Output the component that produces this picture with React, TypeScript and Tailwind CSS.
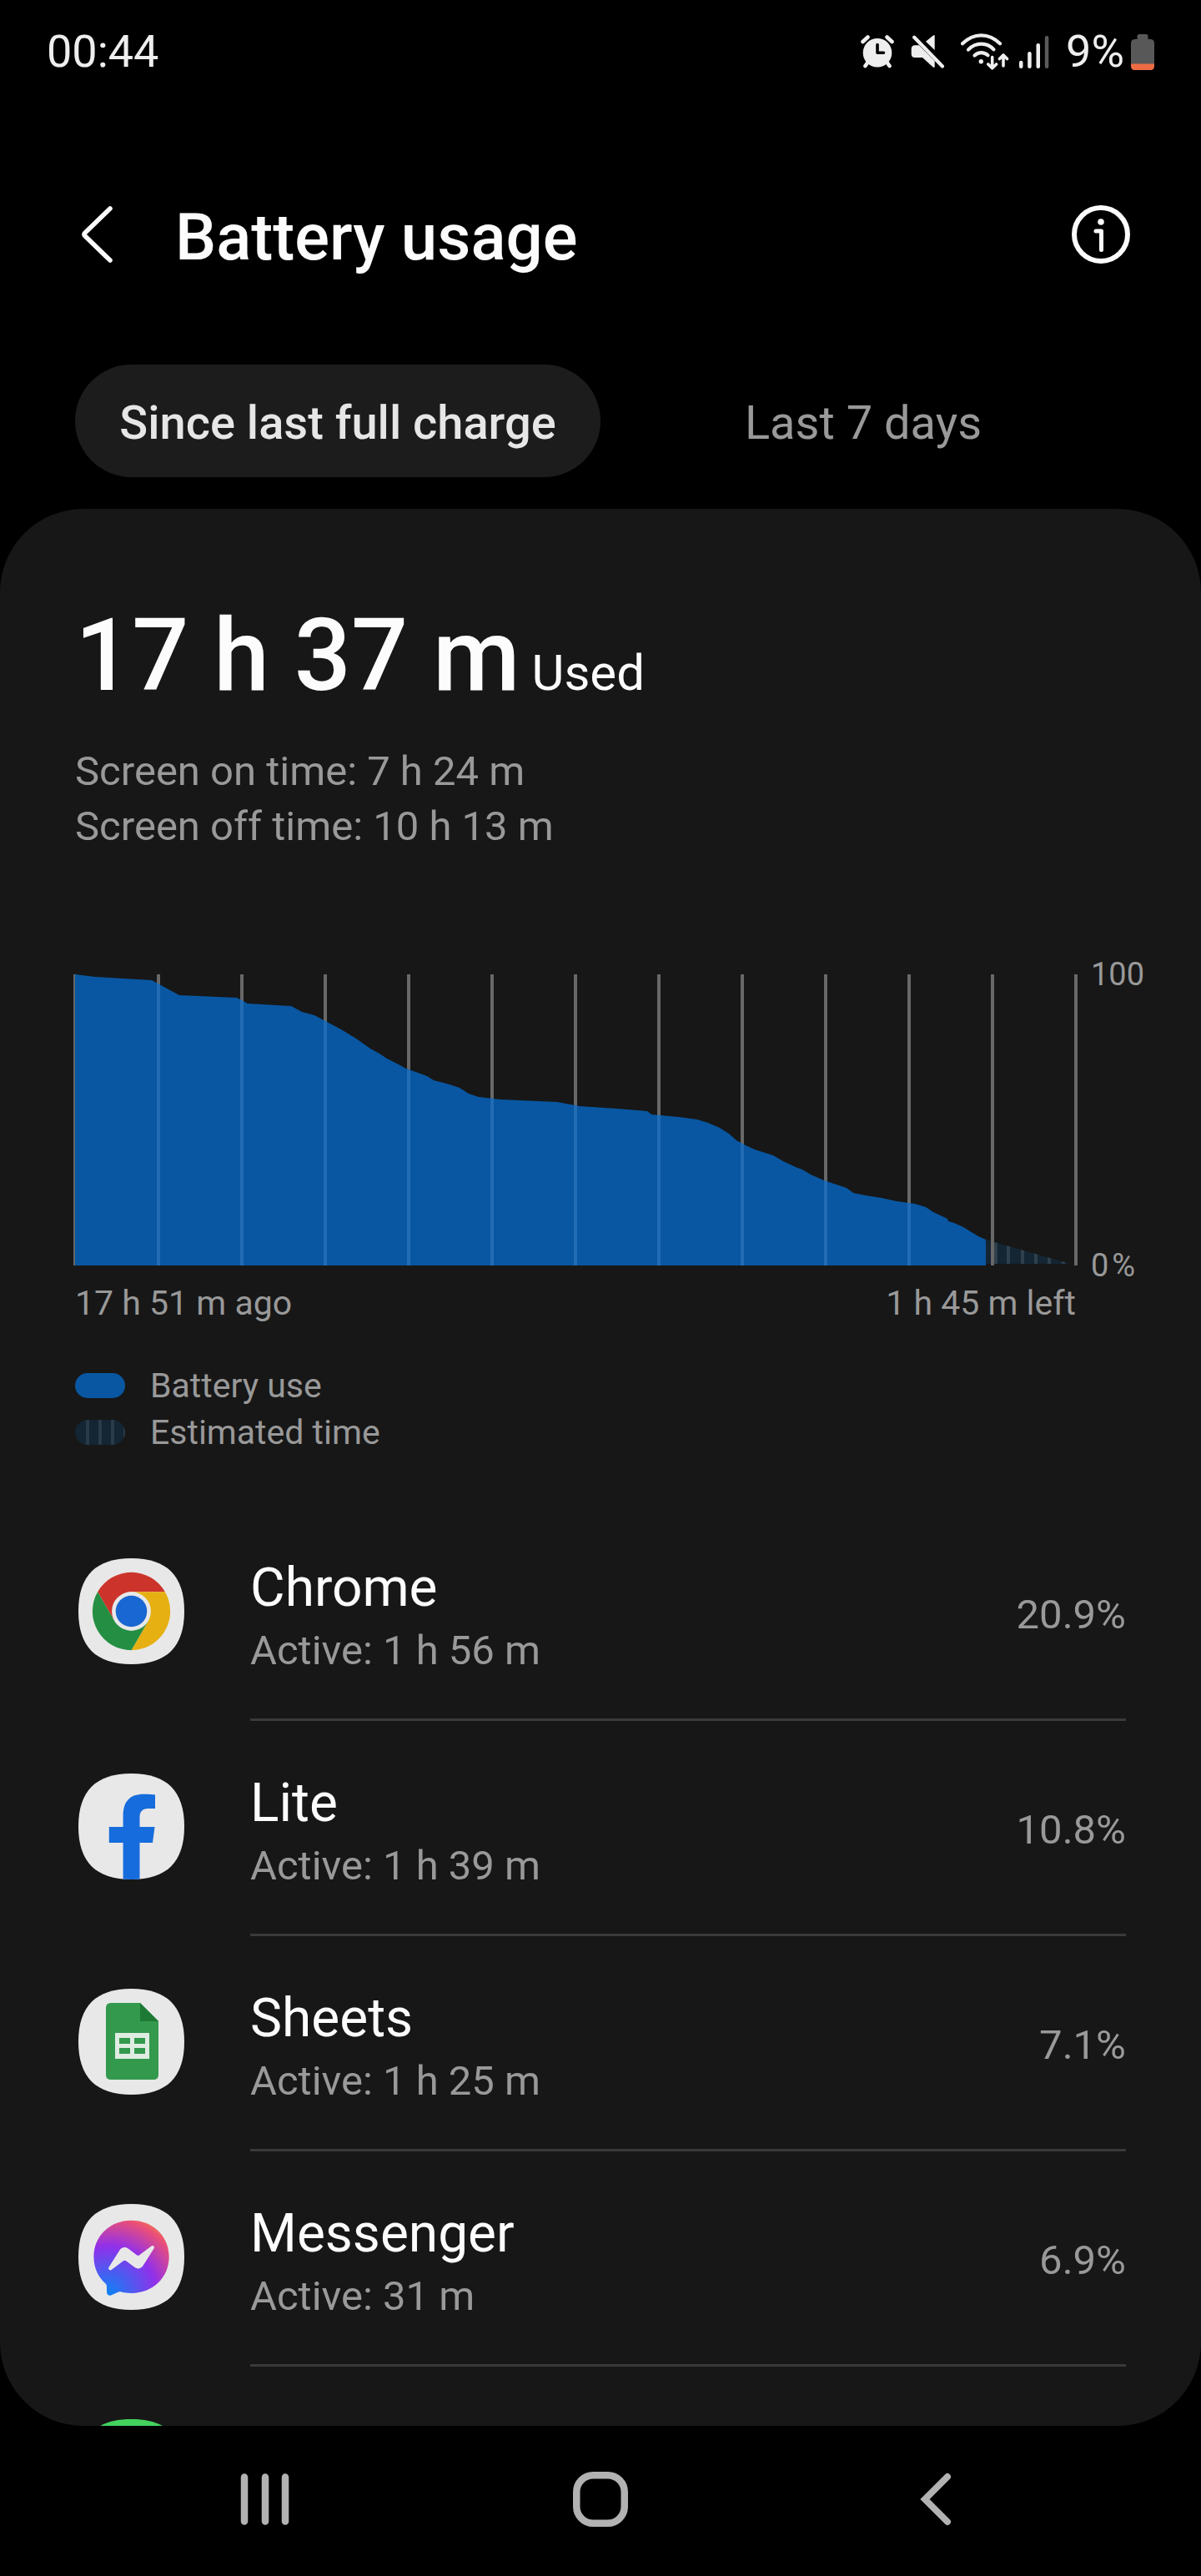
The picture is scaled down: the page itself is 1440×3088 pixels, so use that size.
import type { ReactNode } from "react";

const SQUIRCLE =
  "M63.5 0C106 0 127 21 127 63.5C127 106 106 127 63.5 127C21 127 0 106 0 63.5C0 21 21 0 63.5 0Z";

// chart space: 1200 x 349, y is 0 at 100% and 349 at 0%
const curve =
  "0,0 24,3 92,7 101,12 125,25 194,28 207,35 259,38 272,45 287,49 300,56 319,66 337,77 354,89 365,95 374,101 386,107 397,113 414,119 422,122 430,127 449,132 461,136 472,143 484,147 510,150 578,153 605,158 650,161 686,164 691,168 724,171 746,174 759,178 773,184 784,191 793,199 804,205 815,210 837,217 849,224 864,231 872,234 882,240 898,247 925,256 933,262 948,265 967,268 985,272 1007,275 1020,279 1029,285 1046,293 1047,296 1054,298 1065,303 1083,314 1092,318";

const gridLines = Array.from({ length: 13 }, (_, i) => i * 100);

const IconTile = ({ id, fill, children }: { id: string; fill: string; children?: ReactNode }) => (
  <svg viewBox="0 0 127 127" className="w-[127px] h-[127px] shrink-0" aria-hidden="true">
    <clipPath id={id}>
      <path d={SQUIRCLE} />
    </clipPath>
    <path d={SQUIRCLE} fill={fill} />
    <g clipPath={`url(#${id})`}>{children}</g>
  </svg>
);

const ChromeIcon = () => (
  <IconTile id="tile-chrome" fill="#e8e8e8">
    <g transform="translate(63.5 63.5)">
      <path d="M-40.4 -23.35A46.7 46.7 0 0 1 40.4 -23.35H0L0 0L-20.2 11.7Z" fill="#cc342b" />
      <path d="M40.4 -23.35A46.7 46.7 0 0 1 0 46.7L20.2 11.7L0 0V-23.35Z" fill="#e6b012" />
      <path d="M0 46.7A46.7 46.7 0 0 1 -40.4 -23.35L-20.2 11.7L0 0L20.2 11.7Z" fill="#248f42" />
      <circle r="23.4" fill="#e8e8e8" />
      <circle r="18.8" fill="#1967d2" />
    </g>
  </IconTile>
);

const LiteIcon = () => (
  <IconTile id="tile-lite" fill="#e8e8e8">
    <path
      d="M53.6 127V83H36.8V64H53.6V51C53.6 33 62 24.7 78 24.7C84 24.7 89 25 92 25.6V42H84C76 42 73.5 46 73.5 53V64H91.5L89 83H73.5V127Z"
      fill="#166cdc"
    />
  </IconTile>
);

const SheetsIcon = () => (
  <IconTile id="tile-sheets" fill="#e8e8e8">
    <path d="M39 17H74L96 39V103Q96 109 90 109H39Q33 109 33 103V23Q33 17 39 17Z" fill="#33994d" />
    <path d="M74 17L96 39H74Z" fill="#1d7a35" />
    <path
      fillRule="evenodd"
      d="M44 53H85V84H44ZM49 59V66H62V59ZM67 59V66H80V59ZM49 71V78H62V71ZM67 71V78H80V71Z"
      fill="#dfece2"
    />
  </IconTile>
);

const MessengerIcon = () => (
  <IconTile id="tile-messenger" fill="#e8e8e8">
    <radialGradient id="messenger-fill" cx="0.19" cy="0.99" r="1.09">
      <stop offset="0" stopColor="#0a84f5" />
      <stop offset="0.6" stopColor="#9230ea" />
      <stop offset="0.93" stopColor="#ea4f78" />
      <stop offset="1" stopColor="#f06a5c" />
    </radialGradient>
    <path
      d="M63.5 19.7C38 19.7 18.4 38.3 18.4 63.3C18.4 76.5 23.8 87.8 32.6 95.6C33.4 96.3 33.8 97.3 33.9 98.3L34.1 106.3C34.2 108.9 36.8 110.5 39.1 109.5L48.1 105.5C48.9 105.2 49.8 105.1 50.6 105.3C54.7 106.4 59 107 63.5 107C89 107 108.7 88.3 108.7 63.3C108.7 38.3 89 19.7 63.5 19.7Z"
      fill="url(#messenger-fill)"
    />
    <path
      d="M36.4 76.1L49.7 55.1C51.8 51.7 56.3 50.9 59.4 53.3L70 61.2C71 61.9 72.3 61.9 73.2 61.2L87.5 50.4C89.4 48.9 91.9 51.2 90.6 53.3L77.4 74.3C75.3 77.6 70.8 78.5 67.6 76.1L57.1 68.2C56.1 67.5 54.8 67.5 53.9 68.2L39.6 79C37.7 80.5 35.2 78.2 36.4 76.1Z"
      fill="#e8e8e8"
    />
  </IconTile>
);

const apps = [
  { name: "Chrome", active: "1 h 56 m", percent: "20.9%", icon: <ChromeIcon /> },
  { name: "Lite", active: "1 h 39 m", percent: "10.8%", icon: <LiteIcon /> },
  { name: "Sheets", active: "1 h 25 m", percent: "7.1%", icon: <SheetsIcon /> },
  { name: "Messenger", active: "31 m", percent: "6.9%", icon: <MessengerIcon /> },
];

const StatusBar = () => (
  <div className="h-[124px] flex items-center justify-between px-14 text-[54px] leading-none text-[#eeeeee]">
    <span>00:44</span>
    <div className="flex items-center">
      <svg viewBox="0 0 40 40" className="w-10 h-10" fill="none" strokeLinecap="round" aria-hidden="true">
        <circle cx="20" cy="21.3" r="17.3" fill="#eeeeee" />
        <path d="M2.5 8L8.5 2.5M37.5 8L31.5 2.5M5.5 37L9 32M34.5 37L31 32" stroke="#eeeeee" strokeWidth="4.6" />
        <path d="M20 11.5V21.3H27.5" stroke="#000000" strokeWidth="3.6" strokeLinejoin="round" />
      </svg>
      <svg viewBox="0 0 40 40" className="w-10 h-10 ml-5" fill="#eeeeee" aria-hidden="true">
        <path d="M28.7 0V18L18 7.7L27 0.4Q28.7 -0.6 28.7 1.5Z" />
        <path d="M5 12.3H10L28.7 31.3V37.5Q28.7 40 26.5 38.3L14 27H5Q0.7 27 0.7 22.5V17Q0.7 12.3 5 12.3Z" />
        <path d="M4.2 2.8L38 37.5" stroke="#eeeeee" strokeWidth="4.2" strokeLinecap="round" />
      </svg>
      <svg
        viewBox="0 0 58 44"
        className="w-[58px] h-11 ml-5"
        fill="none"
        stroke="#eeeeee"
        strokeWidth="4.2"
        strokeLinecap="round"
        strokeLinejoin="round"
        aria-hidden="true"
      >
        <path d="M2 12.3Q12 2.3 24.5 2.3T47 12.3" />
        <path d="M9 19.6Q15.5 12.6 24.5 12.6T39.5 19.3" />
        <path d="M16.5 26.5Q20 23.2 24.5 23.2T32.5 26.3" />
        <circle cx="24.3" cy="33.7" r="2.7" fill="#eeeeee" stroke="none" />
        <path d="M37.7 28.5V41.5M32.8 37L37.7 41.8L42.6 37M51 39V26M46.5 30.5L51 26L55.5 30.5" strokeWidth="3.6" />
      </svg>
      <svg viewBox="0 0 36 39" className="w-9 h-[39px] ml-3" fill="#eeeeee" aria-hidden="true">
        <rect x="0" y="29.7" width="4.5" height="9.3" rx="2.2" />
        <rect x="10.2" y="19" width="4.5" height="20" rx="2.2" />
        <rect x="20.5" y="9" width="4.5" height="30" rx="2.2" />
        <rect x="30.8" y="0" width="4.5" height="39" rx="2.2" fill="#5a5a5a" />
      </svg>
      <span className="ml-5">9%</span>
      <svg viewBox="0 0 28 43" className="w-7 h-[43px] ml-2" aria-hidden="true">
        <clipPath id="battery-shape">
          <path d="M10 0H18Q20.5 0 20.5 2.5V6H23Q28 6 28 11V38Q28 43 23 43H5Q0 43 0 38V11Q0 6 5 6H7.5V2.5Q7.5 0 10 0Z" />
        </clipPath>
        <g clipPath="url(#battery-shape)">
          <rect width="28" height="43" fill="#585858" />
          <rect y="35.5" width="28" height="8" fill="#ee6c45" />
        </g>
      </svg>
    </div>
  </div>
);

const Header = () => (
  <header className="h-[313px] flex items-center pl-[90px] pr-[85px]">
    <button type="button" aria-label="Navigate up" className="w-[120px] h-[70px]">
      <svg
        viewBox="0 0 54 70"
        className="w-[54px] h-[70px]"
        fill="none"
        stroke="#fcfcfc"
        strokeWidth="5.5"
        strokeLinecap="round"
        strokeLinejoin="round"
      >
        <path d="M42 4L12 33Q10 35 12 37L42 66" />
      </svg>
    </button>
    <h1 className="flex-1 pt-2 text-[78px] leading-[94px] font-medium text-[#fcfcfc]">Battery usage</h1>
    <button type="button" aria-label="Information" className="w-[70px] h-[70px]">
      <svg
        viewBox="0 0 70 70"
        className="w-[70px] h-[70px]"
        fill="none"
        stroke="#fcfcfc"
        strokeWidth="5"
        strokeLinecap="round"
        strokeLinejoin="round"
      >
        <circle cx="35" cy="35" r="32" strokeWidth="6" />
        <circle cx="35" cy="20" r="3.8" fill="#fcfcfc" stroke="none" />
        <path d="M29 31H35.5V53.5" />
      </svg>
    </button>
  </header>
);

const Tabs = () => (
  <div role="tablist" className="flex px-[90px] text-[56px] leading-[66px]">
    <button
      type="button"
      role="tab"
      aria-selected="true"
      className="flex-1 h-[135px] pt-1 rounded-full bg-[#1c1c1c] font-medium text-[#e6e6e6]"
    >
      Since last full charge
    </button>
    <button type="button" role="tab" aria-selected="false" className="flex-1 h-[135px] pt-1 text-[#999999]">
      Last 7 days
    </button>
  </div>
);

const UsageChart = () => (
  <div className="mt-36">
    <div className="flex gap-[18px] pl-[90px] pr-[60px]">
      <svg
        viewBox="0 0 1200 349"
        preserveAspectRatio="none"
        className="flex-1 min-w-0 h-[349px] overflow-visible"
        role="img"
        aria-label="Battery level"
      >
        <clipPath id="used-area">
          <polygon points={`-2,0 ${curve} 1092,349 -2,349`} />
        </clipPath>
        <clipPath id="estimated-area">
          <polygon points="1092,318 1190,346 1190,347 1092,347" />
        </clipPath>
        <g clipPath="url(#estimated-area)">
          <rect x="1092" y="300" width="110" height="49" fill="#142533" />
          {[1102, 1117, 1134, 1150, 1166, 1183].map((x) => (
            <rect key={x} x={x} y="300" width="4" height="49" fill="#2f404c" />
          ))}
        </g>
        {gridLines.map((x) => (
          <rect key={x} x={x - 2} y="0" width="4" height="349" fill="#686868" />
        ))}
        <g clipPath="url(#used-area)">
          <rect width="1092" height="349" fill="#0957a2" />
          {gridLines.slice(1).map((x) => (
            <rect key={x} x={x - 2} y="0" width="4" height="349" fill="#216cb5" />
          ))}
        </g>
      </svg>
      <div className="w-[72px] -my-5 flex flex-col justify-between text-[38px] leading-[40px] text-[#999999]">
        <span>100</span>
        <span className="flex gap-1">
          <span>0</span>
          <span>%</span>
        </span>
      </div>
    </div>
    <div className="mt-5 pl-[90px] pr-[150px] flex justify-between text-[41px] leading-[50px] text-[#999999]">
      <span>17 h 51 m ago</span>
      <span>1 h 45 m left</span>
    </div>
  </div>
);

const Legend = () => (
  <ul className="mt-[46px] px-[90px] text-[41px] leading-[56px] text-[#999999]">
    <li className="flex items-center gap-[30px]">
      <span className="w-[60px] h-[30px] rounded-full bg-[#0957a2]" />
      Battery use
    </li>
    <li className="flex items-center gap-[30px]">
      <svg viewBox="0 0 60 30" className="w-[60px] h-[30px]" aria-hidden="true">
        <clipPath id="legend-pill">
          <rect width="60" height="30" rx="15" />
        </clipPath>
        <g clipPath="url(#legend-pill)">
          <rect width="60" height="30" fill="#142533" />
          <path d="M15 0V30M30 0V30M45 0V30M60 0V30" stroke="#2a3a47" strokeWidth="4" />
        </g>
      </svg>
      Estimated time
    </li>
  </ul>
);

const AppList = () => (
  <ul className="mt-[60px]">
    {apps.map((app) => (
      <li key={app.name} className="flex pl-[94px] pr-[90px]">
        <div className="pt-[63px]">{app.icon}</div>
        <div className="flex-1 ml-[79px] h-[258px] flex justify-between border-b-3 border-[#3a3a3a]">
          <div className="pt-[61px]">
            <p className="text-[64px] leading-[76px] text-[#fcfcfc]">{app.name}</p>
            <p className="text-[49px] leading-[74px] text-[#999999]">Active: {app.active}</p>
          </div>
          <span className="pt-[101px] text-[49px] leading-[60px] text-[#999999]">{app.percent}</span>
        </div>
      </li>
    ))}
    {/* next row, only its top edge shows above the card's end */}
    <li className="h-[71px] pl-[94px] pt-[63px] overflow-hidden">
      <IconTile id="tile-next" fill="#43d25c" />
    </li>
  </ul>
);

const NavBar = () => (
  <nav className="h-[180px] pb-1 flex items-center justify-center gap-[336px]">
    <button type="button" aria-label="Recent apps">
      <svg viewBox="0 0 66 66" className="w-[66px] h-[66px]" stroke="#b2b2b2" strokeWidth="8.5" strokeLinecap="round">
        <path d="M8 6.5V59.500M33 6.5V59.500M57 6.5V59.500" />
      </svg>
    </button>
    <button type="button" aria-label="Home">
      <svg viewBox="0 0 66 66" className="w-[66px] h-[66px]" fill="none" stroke="#b2b2b2" strokeWidth="8.5">
        <rect x="4.25" y="4.25" width="57.5" height="57.5" rx="20" />
      </svg>
    </button>
    <button type="button" aria-label="Back">
      <svg viewBox="0 0 66 66" className="w-[66px] h-[66px]" fill="none" stroke="#b2b2b2" strokeWidth="8" strokeLinecap="round">
        <path d="M47 6L20 33L47 60" />
      </svg>
    </button>
  </nav>
);

const App = () => {
  return (
    <div className="min-h-screen bg-black font-['Roboto',sans-serif]">
      <StatusBar />
      <Header />
      <Tabs />
      <main className="mt-[38px] pt-[106px] rounded-[100px] overflow-hidden bg-[#171717]">
        <div className="px-[90px]">
          <p className="flex items-baseline gap-[14px] text-[#fcfcfc]">
            <span className="text-[120px] leading-[140px] font-medium">17 h 37 m</span>
            <span className="text-[60px] leading-[70px]">Used</span>
          </p>
          <div className="mt-9 text-[49px] leading-[66px] text-[#999999]">
            <p>Screen on time: 7 h 24 m</p>
            <p>Screen off time: 10 h 13 m</p>
          </div>
        </div>
        <UsageChart />
        <Legend />
        <AppList />
      </main>
      <NavBar />
    </div>
  );
};

export default App;
